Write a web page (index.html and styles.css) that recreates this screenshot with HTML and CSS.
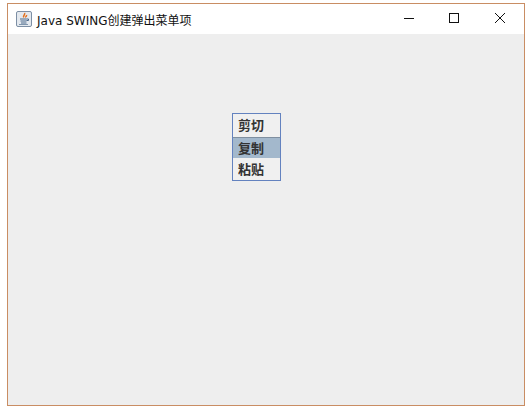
FILE: index.html
```html
<!DOCTYPE html>
<html lang="zh">
<head>
  <meta charset="UTF-8" />
  <title>Java SWING创建弹出菜单项</title>
  <link rel="stylesheet" href="styles.css">
</head>
<body>

<div class="window">
  <div class="titlebar">
    <svg class="app-icon" width="16" height="16" viewBox="0 0 16 16">
      <rect x="0.5" y="0.5" width="15" height="15" rx="1.5" fill="#e4e9ef" stroke="#7d8fa5"/>
      <path d="M8.500 2c1.200 1.500-1.800 2.500-.8 4.500M10.500 4c.4 1-1.200 1.500-.6 2.500" fill="none" stroke="#e2701f" stroke-width="1.500"/>
      <path d="M4 8h6.500M4.500 10h6M5 12h5.500" stroke="#4c6a8c" stroke-width="1"/>
      <path d="M3 13.500h9" stroke="#8096ad" stroke-width="1"/>
      <path d="M10.500 8h2v1.500h-2" fill="none" stroke="#4c6a8c" stroke-width="1"/>
    </svg>
    <span class="title">Java SWING创建弹出菜单项</span>
    <div class="controls">
      <svg width="45" height="30" viewBox="0 0 45 30"><path d="M16 14.500h10" stroke="#111" stroke-width="1"/></svg>
      <svg width="45" height="30" viewBox="0 0 45 30"><rect x="16.500" y="9.500" width="9" height="9" fill="none" stroke="#111" stroke-width="1"/></svg>
      <svg width="45" height="30" viewBox="0 0 45 30"><path d="M17 9l10 10M27 9l-10 10" stroke="#111" stroke-width="1"/></svg>
    </div>
  </div>
  <div class="content">
    <ul class="popup">
      <li class="item">剪切</li>
      <li class="item selected">复制</li>
      <li class="item">粘贴</li>
    </ul>
  </div>
</div>

</body>
</html>
```

FILE: styles.css
```css
html, body {
  margin: 0;
  padding: 0;
  background: #fff;
}
body {
  width: 531px;
  height: 410px;
  overflow: hidden;
  padding: 3px 0 0 7px;
  box-sizing: border-box;
}
.window {
  width: 518px;
  height: 403px;
  box-sizing: border-box;
  border: 1px solid #c98d63;
  display: flex;
  flex-direction: column;
}
.titlebar {
  height: 30px;
  background: #fff;
  display: flex;
  align-items: center;
  padding-left: 8px;
  font-family: "DejaVu Sans", "Noto Sans CJK SC", sans-serif;
  font-size: 12px;
  color: #111;
}
.app-icon {
  margin-right: 5px;
}
.title {
  flex: 1;
  white-space: nowrap;
}
.controls {
  display: flex;
  margin-right: 1px;
}
.controls svg {
  display: block;
}
.content {
  flex: 1;
  background: #eeeeee;
  position: relative;
}
.popup {
  position: absolute;
  left: 224px;
  top: 79px;
  width: 49px;
  height: 68px;
  box-sizing: border-box;
  margin: 0;
  padding: 0;
  list-style: none;
  border: 1px solid #6382bf;
  display: flex;
  flex-direction: column;
}
.item {
  flex: 1;
  display: flex;
  align-items: center;
  padding: 0 0 1px 5px;
  font-family: "Noto Sans CJK SC", sans-serif;
  font-size: 13px;
  font-weight: 700;
  color: #333;
  background: #f0f0f0;
}
.selected {
  flex: 0 0 20px;
  box-sizing: border-box;
  background: #a3b8cc;
  border-top: 1px solid #7f8fa0;
  box-shadow: 0 1px 0 #fff;
}
```
